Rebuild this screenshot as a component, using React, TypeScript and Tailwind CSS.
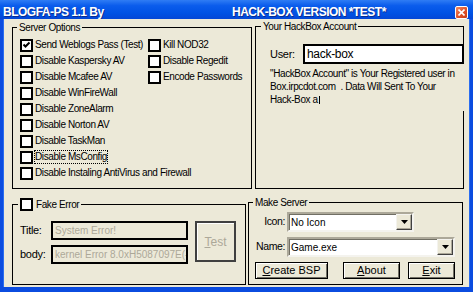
import type { ReactNode } from 'react';

function Box({ checked = false }: { checked?: boolean }) {
  return (
    <span className="flex h-[13px] w-[13px] shrink-0 items-center justify-center border-2 border-black bg-white">
      {checked && (
        <svg width="9" height="9" viewBox="0 0 9 9" className="block">
          <path d="M1.5 3.5 L3.5 5.5 L7.5 1.5" stroke="#000" strokeWidth="2" fill="none" />
        </svg>
      )}
    </span>
  );
}

function CheckRow({ label, checked, focus }: { label: string; checked?: boolean; focus?: boolean }) {
  return (
    <div className="flex h-[16px] items-center gap-[2px] whitespace-nowrap">
      <Box checked={checked} />
      <span className={focus ? 'leading-[12px] outline-1 outline-dotted outline-black' : 'leading-[12px]'}>{label}</span>
    </div>
  );
}

function DropArrow() {
  return (
    <span className="flex h-[16px] w-[16px] shrink-0 items-center justify-center border border-t-[#f4f3ee] border-l-[#f4f3ee] border-b-[#404040] border-r-[#404040] bg-[#ece9d8] shadow-[inset_-1px_-1px_0_#aca899]">
      <svg width="7" height="4" viewBox="0 0 7 4" className="block">
        <path d="M0 0 H7 L3.5 4 Z" fill="#000" />
      </svg>
    </span>
  );
}

function Combo({ value, width }: { value: string; width: string }) {
  return (
    <div className={`flex h-[20px] items-center border-2 border-t-[#aca899] border-l-[#aca899] border-b-[#f4f3ee] border-r-[#f4f3ee] bg-white shadow-[inset_1px_1px_0_#716f64] ${width}`}>
      <span className="flex-1 pl-[2px] text-[10px] tracking-normal">{value}</span>
      <DropArrow />
    </div>
  );
}

function Btn({ children, width }: { children: ReactNode; width: string }) {
  return (
    <div className={`flex h-[17px] items-center justify-center border border-black bg-[#ece9d8] text-[11px] tracking-normal shadow-[inset_1px_1px_0_#fff,inset_-1px_-1px_0_#716f64] ${width}`}>
      {children}
    </div>
  );
}

function TitleBar() {
  return (
    <div className="flex h-[19px] shrink-0 items-center bg-[linear-gradient(to_bottom,#2f7cf4,#0a5cec_30%,#0052e4_70%,#0447d6)] pl-[3px] pr-[5px] pt-[5px] text-[12px] font-bold tracking-[-0.5px] text-white [text-shadow:1px_1px_0_#0b2d8f]">
      <span className="w-[229px] shrink-0 whitespace-nowrap">BLOGFA-PS 1.1 By</span>
      <span className="whitespace-nowrap">HACK-BOX VERSION *TEST*</span>
      <span className="ml-auto flex h-[13px] w-[13px] items-center justify-center rounded-[2px] border border-white bg-[linear-gradient(135deg,#f08a62,#e0522a_55%,#c53c18)]">
        <svg width="7" height="7" viewBox="0 0 7 7" className="block">
          <path d="M0.5 0.5 L6.5 6.5 M6.5 0.5 L0.5 6.5" stroke="#fff" strokeWidth="1.6" />
        </svg>
      </span>
    </div>
  );
}

export default function App() {
  return (
    <div className="flex h-[292px] w-[473px] flex-col overflow-hidden bg-[#0b4ce0] font-['Liberation_Sans',Arial,sans-serif] text-[10px] tracking-[-0.4px] text-black">
      <TitleBar />
      <div className="flex min-h-0 flex-1 pb-[5px] pl-[4px] pr-[4px]">
        <div className="flex flex-1 bg-[#ece9d8] shadow-[-1px_0_0_#2a6df0,1px_0_0_#2a6df0]">
          {/* left column */}
          <div className="flex w-[244px] shrink-0 flex-col pl-[8px] pt-[2px]">
            <fieldset className="h-[168px] w-[240px] border border-black">
              <legend className="ml-[4px] px-[2px] leading-[13px]">Server Options</legend>
              <div className="flex pl-[7px] pt-[3px]">
                <div className="w-[128px] shrink-0">
                  <CheckRow label="Send Weblogs Pass (Test)" checked />
                  <CheckRow label="Disable Kaspersky AV" />
                  <CheckRow label="Disable Mcafee AV" />
                  <CheckRow label="Disable WinFireWall" />
                  <CheckRow label="Disable ZoneAlarm" />
                  <CheckRow label="Disable Norton AV" />
                  <CheckRow label="Disable TaskMan" />
                  <CheckRow label="Disable MsConfig" focus />
                  <CheckRow label="Disable Instaling AntiVirus and Firewall" />
                </div>
                <div>
                  <CheckRow label="Kill NOD32" />
                  <CheckRow label="Disable Regedit" />
                  <CheckRow label="Encode Passwords" />
                </div>
              </div>
            </fieldset>

            <fieldset className="mt-[9px] h-[87px] w-[234px] border border-black">
              <legend className="ml-[5px] px-[2px]">
                <span className="flex items-center gap-[3px] leading-[13px]">
                  <Box />
                  Fake Error
                </span>
              </legend>
              <div className="flex pl-[7px] pt-[10px]">
                <div className="flex flex-col gap-[5px]">
                  <div className="flex items-center">
                    <span className="w-[31px] text-[11px] tracking-[-0.3px]">Title:</span>
                    <div className="flex h-[19px] w-[137px] items-center overflow-hidden whitespace-nowrap border-2 border-black bg-[#ece9d8] pl-[2px] text-[10px] tracking-normal text-[#aca899]">
                      System Error!
                    </div>
                  </div>
                  <div className="flex items-center">
                    <span className="w-[31px] text-[11px] tracking-[-0.3px]">body:</span>
                    <div className="flex h-[19px] w-[137px] items-center overflow-hidden whitespace-nowrap border-2 border-black bg-[#ece9d8] pl-[2px] text-[10px] tracking-normal text-[#aca899]">
                      kernel Error 8.0xH5087097E(-2147
                    </div>
                  </div>
                </div>
                <div className="ml-[7px] flex h-[41px] w-[41px] items-center justify-center border-2 border-[#404040] text-[12px] tracking-normal text-[#aca899] shadow-[inset_1px_1px_0_#fff]">
                  <span>
                    <span className="underline">T</span>est
                  </span>
                </div>
              </div>
            </fieldset>
          </div>

          {/* right column */}
          <div className="flex flex-1 flex-col pt-[1px]">
            <fieldset className="ml-[7px] h-[169px] w-[209px] border border-black">
              <legend className="ml-[5px] px-[2px] leading-[13px]">Your HackBox Account</legend>
              <div className="pl-[14px] pt-[11px]">
                <div className="flex items-center">
                  <span className="w-[33px] text-[11px] tracking-[-0.3px]">User:</span>
                  <div className="-mr-px flex h-[20px] w-[161px] items-center border-2 border-black bg-white pl-[2px] text-[12px] tracking-[-0.3px]">
                    hack-box
                  </div>
                </div>
                <div className="relative -mr-[2px] h-[47px] whitespace-pre bg-[#ece9d8] pt-[3px] leading-[13px]">
                  {'"HackBox Account" is Your Registered user in\nBox.irpcdot.com  . Data Will Sent To Your\nHack-Box a'}
                  <span className="ml-[1px] inline-block h-[8px] w-[1px] bg-black align-[-1px]" />
                </div>
              </div>
            </fieldset>

            <fieldset className="mt-[7px] h-[89px] w-[215px] border border-black">
              <legend className="ml-[4px] px-[2px] leading-[13px]">Make Server</legend>
              <div className="flex flex-col gap-[5px] pt-[3px]">
                <div className="flex items-center">
                  <span className="w-[36px] text-right text-[10.5px]">Icon:</span>
                  <div className="ml-[2px]">
                    <Combo value="No Icon" width="w-[127px]" />
                  </div>
                </div>
                <div className="flex items-center">
                  <span className="w-[36px] text-right text-[10.5px]">Name:</span>
                  <div className="ml-[2px]">
                    <Combo value="Game.exe" width="w-[168px]" />
                  </div>
                </div>
                <div className="flex pl-[6px]">
                  <Btn width="w-[73px]">
                    <span>
                      <span className="underline">C</span>reate BSP
                    </span>
                  </Btn>
                  <div className="ml-[15px]">
                    <Btn width="w-[57px]">
                      <span>
                        <span className="underline">A</span>bout
                      </span>
                    </Btn>
                  </div>
                  <div className="ml-[8px]">
                    <Btn width="w-[47px]">
                      <span>
                        <span className="underline">E</span>xit
                      </span>
                    </Btn>
                  </div>
                </div>
              </div>
            </fieldset>
          </div>
        </div>
      </div>
    </div>
  );
}
